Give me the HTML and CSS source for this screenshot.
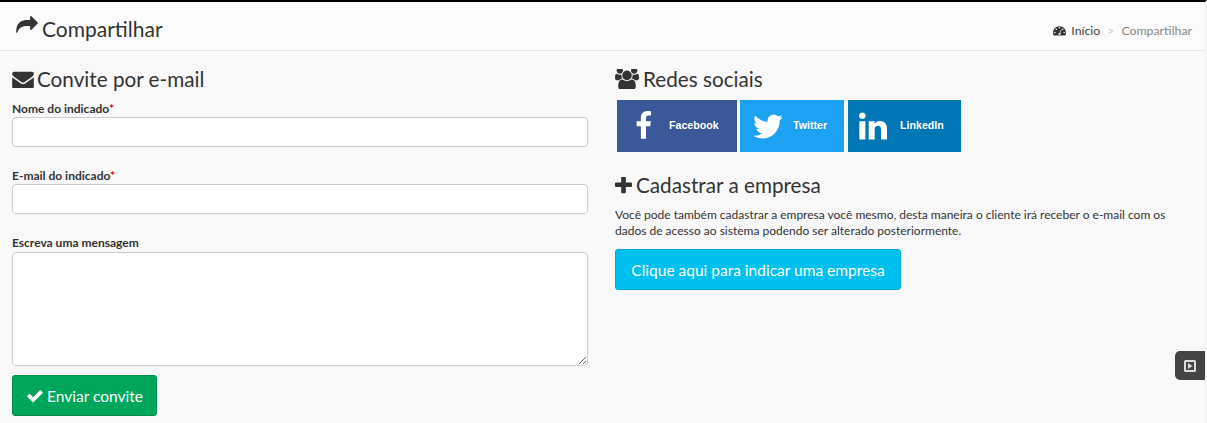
FILE: index.html
```html
<!DOCTYPE html>
<html lang="pt-BR">
<head>
  <meta charset="UTF-8">
  <title>Compartilhar</title>
  <link rel="stylesheet" href="styles.css">
</head>
<body>
  <header class="page-header">
    <h1>
      <svg class="icon share-icon" viewBox="0 -76 1792 1400"><path d="M1792 500q0 26-19 45l-512 512q-19 19-45 19t-45-19-19-45v-256h-224C560 756 250 850 90 1290Q60 1350 30 1320C-10 1250 0 1100 30 950C110 400 520 244 928 244H1152v-256q0-26 19-45t45-19 45 19l512 512q19 19 19 45z"/></svg>
      Compartilhar
    </h1>
    <nav class="breadcrumb">
      <a href="#">
        <svg class="icon crumb-icon" viewBox="0 0 1792 1400"><path fill-rule="evenodd" d="M896 100c-495 0-896 400-896 896 0 135 30 262 84 376 10 18 30 28 50 28h1524c20 0 40-10 50-28 54-114 84-241 84-376 0-496-401-896-896-896zM896 220a110 110 0 1 1 0 220 110 110 0 0 1 0-220zM440 410a110 110 0 1 1 0 220 110 110 0 0 1 0-220zM1352 410a110 110 0 1 1 0 220 110 110 0 0 1 0-220zM250 860a110 110 0 1 1 0 220 110 110 0 0 1 0-220zM1542 860a110 110 0 1 1 0 220 110 110 0 0 1 0-220zM1110 530l70 25-170 540c60 50 80 130 50 200H750c-50-110 30-240 170-250z"/></svg>
        Início
      </a>
      <span class="crumb-sep">&gt;</span>
      <span class="crumb-current">Compartilhar</span>
    </nav>
  </header>

  <main class="content">
    <section class="invite">
      <h2>
        <svg class="icon envelope" viewBox="0 0 1792 1408"><path transform="translate(0 -192)" d="M1792 710v794q0 66-47 113t-113 47h-1472q-66 0-113-47t-47-113v-794q44 49 101 87 362 246 497 345 57 42 92.5 65.5t94.5 48 110 24.5h2q51 0 110-24.5t94.5-48 92.5-65.5q170-123 498-345 57-39 100-87zm0-294q0 79-49 151t-122 123q-376 261-468 325-10 7-42.5 30.5t-54 38-52 32.5-57.5 27-50 9h-2q-23 0-50-9t-57.5-27-52-32.5-54-38-42.5-30.5q-91-64-262-182.5t-205-142.5q-62-42-117-115.5t-55-136.5q0-78 41.5-130t118.5-52h1472q65 0 112.5 47t47.5 113z"/></svg>
        Convite por e-mail
      </h2>
      <form>
        <div class="form-group">
          <label for="nome">Nome do indicado<span class="req">*</span></label>
          <input type="text" id="nome">
        </div>
        <div class="form-group">
          <label for="email">E-mail do indicado<span class="req">*</span></label>
          <input type="text" id="email">
        </div>
        <div class="form-group">
          <label for="mensagem">Escreva uma mensagem</label>
          <textarea id="mensagem"></textarea>
        </div>
        <button type="button" class="btn btn-green">
          <svg class="icon check" viewBox="0 0 1792 1400"><path transform="translate(0 -200)" d="M1671 566q0 40-28 68l-724 724-136 136q-28 28-68 28t-68-28l-136-136-362-362q-28-28-28-68t28-68l136-136q28-28 68-28t68 28l294 295 656-657q28-28 68-28t68 28l136 136q28 28 28 68z"/></svg>
          Enviar convite
        </button>
      </form>
    </section>

    <section class="side">
      <h2>
        <svg class="icon users" viewBox="0 0 1920 1600"><path transform="translate(0 -128)" d="M593 896q-162 5-265 128h-134q-82 0-138-40.500t-56-118.500q0-353 124-353 6 0 43.500 21t97.500 42.500 119 21.500q67 0 133-23-5 37-5 66 0 139 81 256zm1071 637q0 120-73 189.500t-194 69.500h-874q-121 0-194-69.500t-73-189.500q0-53 3.500-103.500t14-109 26.500-108.500 43-97.500 62-81 85.500-53.500 111.500-20q10 0 43 21.500t73 48 107 48 135 21.500 135-21.500 107-48 73-48 43-21.500q61 0 111.500 20t85.500 53.500 62 81 43 97.500 26.500 108.500 14 109 3.500 103.500zm-1024-1277q0 106-75 181t-181 75-181-75-75-181 75-181 181-75 181 75 75 181zm704 384q0 159-112.500 271.500t-271.500 112.500-271.500-112.500-112.500-271.500 112.500-271.500 271.500-112.500 271.500 112.500 112.500 271.500zm576 225q0 78-56 118.500t-138 40.500h-134q-103-123-265-128 81-117 81-256 0-29-5-66 66 23 133 23 59 0 119-21.500t97.500-42.500 43.500-21q124 0 124 353zm-128-609q0 106-75 181t-181 75-181-75-75-181 75-181 181-75 181 75 75 181z"/></svg>
        Redes sociais
      </h2>
      <div class="social">
        <a href="#" class="social-btn fb">
          <svg class="fb-icon" viewBox="0 0 1024 1792"><path transform="translate(-320 0)" d="M1343 12v264h-157q-86 0-116 36t-30 108v189h293l-39 296h-254v759h-306v-759h-255v-296h255v-218q0-186 104-288.500t277-102.500q147 0 228 12z"/></svg>
          <span>Facebook</span>
        </a>
        <a href="#" class="social-btn tw">
          <svg class="tw-icon" viewBox="100 200 1600 1400"><path d="M1684 408q-67 98-162 167 1 14 1 42 0 130-38 259.500t-115.500 248.500-184.500 210.500-258 146-323 54.500q-271 0-496-145 35 4 78 4 225 0 401-138-105-2-188-64.500t-114-159.500q33 5 61 5 43 0 85-11-112-23-185.500-111.500t-73.500-205.500v-4q68 38 146 41-66-44-105-115t-39-154q0-88 44-163 121 149 294.500 238.500t371.500 99.500q-8-38-8-74 0-134 94.500-228.500t228.500-94.500q140 0 236 102 109-21 205-78-37 115-142 178 92-10 184-50z"/></svg>
          <span>Twitter</span>
        </a>
        <a href="#" class="social-btn in">
          <svg class="in-icon" viewBox="128 148 1536 1468"><path d="M477 625v991h-330v-991h330zm21-306q1 73-50.500 122t-135.500 49h-2q-82 0-132-49t-50-122q0-74 51.500-122.500t134.500-48.500 133 48.500 51 122.500zm1166 729v568h-329v-530q0-105-40.500-164.500t-126.500-59.500q-63 0-105.500 34.500t-63.500 85.500q-11 30-11 81v553h-329q2-399 2-647t-1-296l-1-48h329v144h-2q20-32 41-56t56.500-52 87-43.500 114.500-15.500q171 0 275 113.500t104 332.500z"/></svg>
          <span>LinkedIn</span>
        </a>
      </div>

      <h2 class="register-title">
        <svg class="icon plus" viewBox="192 192 1408 1408"><path d="M1600 736v192q0 40-28 68t-68 28h-416v416q0 40-28 68t-68 28h-192q-40 0-68-28t-28-68v-416h-416q-40 0-68-28t-28-68v-192q0-40 28-68t68-28h416v-416q0-40 28-68t68-28h192q40 0 68 28t28 68v416h416q40 0 68 28t28 68z"/></svg>
        Cadastrar a empresa
      </h2>
      <p class="register-text">Você pode também cadastrar a empresa você mesmo, desta maneira o cliente irá receber o e-mail com os dados de acesso ao sistema podendo ser alterado posteriormente.</p>
      <button type="button" class="btn btn-blue">Clique aqui para indicar uma empresa</button>
    </section>
  </main>

  <!-- botao flutuante do canto -->
  <div class="float-tab">
    <svg viewBox="0 0 12 12" width="12" height="12"><path fill-rule="evenodd" fill="#ddd" d="M1.500 0h9A1.500 1.500 0 0 1 12 1.500v9a1.500 1.500 0 0 1-1.500 1.500h-9A1.500 1.500 0 0 1 0 10.500v-9A1.500 1.500 0 0 1 1.500 0zM2 2v8h8V2zM4 3l4.500 3L4 9z"/></svg>
  </div>
</body>
</html>
```

FILE: styles.css
```css
html, body {
  height: 100%;
}
body {
  margin: 0;
  background: #f9f9f9;
  border-top: 2px solid #000;
  border-right: 2px solid #f4f4f4;
  box-sizing: border-box;
  font-family: Lato, "Open Sans", sans-serif;
  color: #333;
  overflow: hidden;
  position: relative;
}
.icon {
  fill: #333;
  flex: none;
}

/* Header */
.page-header {
  height: 49px;
  box-sizing: border-box;
  background: #fbfbfb;
  border-bottom: 1px solid #e6e6e6;
  display: flex;
  justify-content: space-between;
  align-items: center;
  padding: 5px 13px 0 16px;
}
.page-header h1 {
  margin: 0;
  font-size: 21px;
  font-weight: 400;
  display: flex;
  align-items: center;
  gap: 4px;
}
.share-icon {
  width: 22px;
  height: 17px;
  margin-top: -9px;
}
.breadcrumb {
  font-size: 12.3px;
  display: flex;
  align-items: center;
  gap: 7px;
  margin-top: 4px;
}
.breadcrumb a {
  color: #444;
  text-decoration: none;
  display: flex;
  align-items: center;
  gap: 5px;
}
.crumb-icon {
  width: 13px;
  height: 11px;
}
.crumb-sep {
  color: #ccc;
}
.crumb-current {
  color: #888;
}

/* Columns */
.content {
  display: grid;
  grid-template-columns: 576px 1fr;
  column-gap: 27px;
  padding: 0 13px 0 12px;
}
h2 {
  margin: 0;
  font-size: 20.7px;
  line-height: 26px;
  font-weight: 400;
  display: flex;
  align-items: center;
  gap: 3px;
}
.invite h2,
.side > h2:first-child {
  margin-top: 15px;
}
.envelope {
  width: 22px;
  height: 17px;
}
.users {
  width: 24px;
  height: 20px;
  margin-right: 1px;
}
.plus {
  width: 17px;
  height: 17px;
  margin-right: 1px;
}

/* Form */
form {
  margin-top: 9px;
}
.form-group {
  margin-bottom: 21px;
}
.form-group:nth-child(3) {
  margin-bottom: 9px;
}
.form-group:nth-child(3) label {
  margin-bottom: 1px;
}
label {
  display: block;
  font-size: 12px;
  line-height: 16px;
  font-weight: 700;
}
.req {
  color: #e00;
}
input,
textarea {
  display: block;
  width: 100%;
  box-sizing: border-box;
  background: #fff;
  border: 1px solid #ccc;
  border-radius: 4px;
}
input {
  height: 30px;
}
textarea {
  height: 114px;
  resize: vertical;
}
.btn {
  border: 1px solid transparent;
  border-radius: 3px;
  color: #fff;
  font-family: inherit;
  font-size: 15.5px;
  display: inline-flex;
  align-items: center;
  justify-content: center;
}
.btn-green {
  width: 145px;
  height: 41px;
  background: #00a65a;
  border-color: #008d4c;
  gap: 3px;
}
.check {
  width: 18px;
  height: 14px;
  fill: #fff;
}
.btn-blue {
  width: 286px;
  height: 41px;
  background: #00c0ef;
  border-color: #00acd6;
  margin-top: 10px;
}

/* Social */
.social {
  display: flex;
  padding-left: 2px;
  margin-top: 8px;
}
.social-btn {
  height: 52px;
  display: flex;
  align-items: center;
  color: #fff;
  font: 700 10.67px "Liberation Sans", Arial, sans-serif;
  text-decoration: none;
  box-sizing: border-box;
}
.social-btn span {
  padding-bottom: 2px;
}
.social-btn svg {
  fill: #fff;
  flex: none;
}
.fb {
  width: 120px;
  background: #3b5998;
  margin-right: 3px;
  padding-left: 16px;
}
.fb-icon {
  width: 19px;
  height: 30px;
  margin-right: 17px;
}
.tw {
  width: 104px;
  background: #1da1f2;
  margin-right: 4px;
  padding-left: 13px;
}
.tw-icon {
  width: 30px;
  height: 27px;
  margin-right: 10px;
}
.in {
  width: 113px;
  background: #0077b5;
  padding-left: 11px;
}
.in-icon {
  width: 28px;
  height: 28px;
  margin-right: 13px;
}
.register-title {
  margin-top: 20px;
}
.register-text {
  margin: 9px 0 0;
  font-size: 12px;
  line-height: 16px;
}

/* Floating tab */
.float-tab {
  position: absolute;
  right: 0;
  top: 349px;
  width: 30px;
  height: 29px;
  background: #444;
  border-radius: 5px 0 0 5px;
  display: flex;
  align-items: center;
  justify-content: center;
}
```
